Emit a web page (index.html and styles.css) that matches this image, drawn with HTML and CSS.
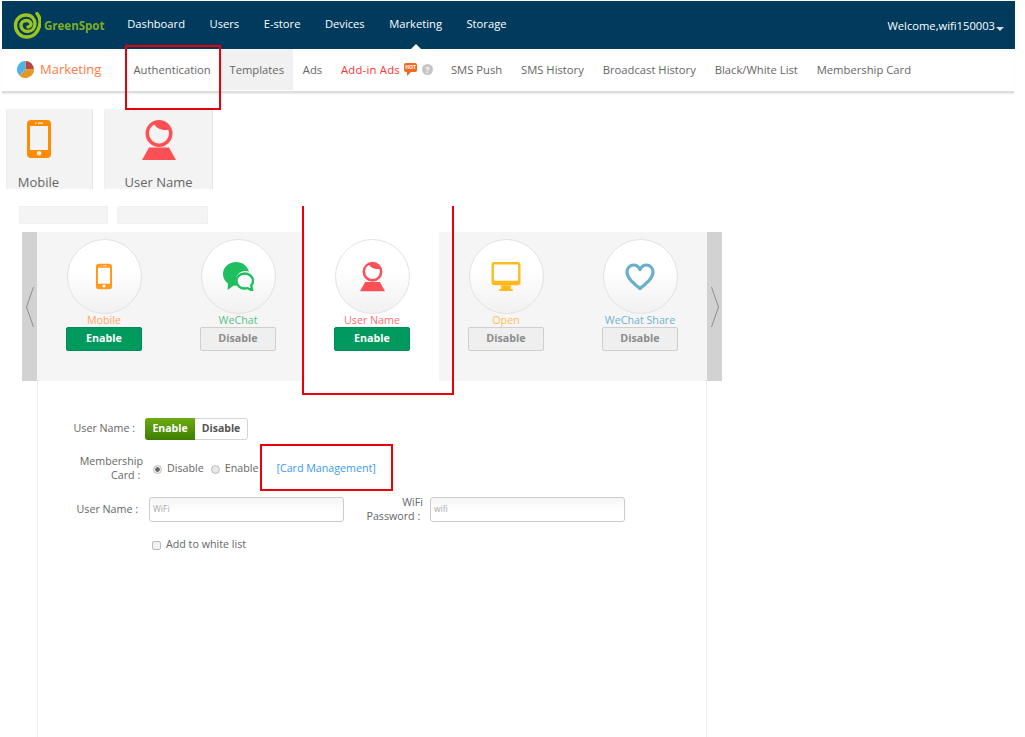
FILE: index.html
```html
<!DOCTYPE html>
<html>
<head>
<meta charset="utf-8">
<title>GreenSpot - Marketing</title>
<link rel="stylesheet" href="styles.css">
</head>
<body>
<svg width="0" height="0" class="defs">
	<symbol id="i-phone" viewBox="0 0 24 38">
		<path fill-rule="evenodd" d="M4 0h16a4 4 0 0 1 4 4v30a4 4 0 0 1-4 4H4a4 4 0 0 1-4-4V4a4 4 0 0 1 4-4zM3 6v24h18V6zM12 31a2.300 2.300 0 1 0 0 4.600 2.300 2.300 0 0 0 0-4.600zM8 2.500v1.200h1.300V2.500zM11 2.500v1.200h5V2.500z"/>
	</symbol>
	<symbol id="i-user" viewBox="0 0 34 40">
		<path fill-rule="evenodd" d="M17 0a13.500 13.500 0 1 1 0 27 13.500 13.500 0 0 1 0-27zM12.500 4.500C9 6 7 9 7 13.500a10 10 0 0 0 20 0c0-1.500-.3-2.700-.8-3.800C22 10.500 15 9.500 12.500 4.500z"/>
		<path d="M7 27.500h20L34 40H0z"/>
	</symbol>
	<symbol id="i-wechat" viewBox="0 0 31 29">
		<path d="M13 0C6 0 0 5 0 12c0 4 2 7.500 5 9.500L4.500 28l6.500-4.500c1.300.3 2.200.4 3 .3-3-5.500-.5-13 6-14.500 2-.5 4-.5 6 .5C24.500 4 19.500 0 13 0z"/>
		<path fill="none" stroke-width="2.400" d="M21.500 11.500a8 7.500 0 1 0 0 15c1 0 1.800-.1 2.700-.5l5 2.400-1-5c1.200-1.300 1.800-3 1.800-4.400 0-4.200-3.700-7.500-8.500-7.500z"/>
	</symbol>
	<symbol id="i-monitor" viewBox="0 0 30 30">
		<path fill-rule="evenodd" d="M3 0h24a3 3 0 0 1 3 3v18a3 3 0 0 1-3 3H3a3 3 0 0 1-3-3V3a3 3 0 0 1 3-3zM2.500 2.500v17h25v-17z"/>
		<path d="M10 24h10v4h-10zM8 28h14v2H8z"/>
	</symbol>
	<symbol id="i-heart" viewBox="0 0 30 28">
		<path fill="none" stroke-width="3.200" stroke-linejoin="round" d="M15 25.500C9 20.500 2 15.500 2 9c0-4 3-7 6.500-7 2.800 0 5 1.500 6.500 4.500C16.500 3.500 18.700 2 21.500 2 25 2 28 5 28 9c0 6.500-7 11.500-13 16.500z"/>
	</symbol>
</svg>

<div class="page">
	<header class="topbar">
		<a class="brand">
			<svg class="brand-mark" viewBox="0 0 28 30">
				<path fill="none" stroke="#9cc31f" stroke-width="3.400" stroke-linecap="round" d="M24 3.500C27 7 27.500 12 26.500 16c-1.500 6.500-6.500 11-12.500 11C7.500 27 2.500 22 2.500 15.500S7.500 5 13.500 5c5 0 8.500 4 8.500 8.500S19 21.500 14.500 21.500C10.500 21.500 8 18.500 8 15.500S10.500 10.500 13.500 10.500s4.500 2 4.500 3.500-1.500 3-3 3"/>
			</svg>
			<span class="brand-name">GreenSpot</span>
		</a>
		<nav class="mainnav">
			<a>Dashboard</a>
			<a>Users</a>
			<a>E-store</a>
			<a>Devices</a>
			<a class="current">Marketing</a>
			<a>Storage</a>
		</nav>
		<div class="welcome">Welcome,wifi150003<i class="caret"></i></div>
	</header>

	<div class="subnav">
		<div class="section">
			<svg class="pie" viewBox="0 0 18 18">
				<path fill="#b5493c" d="M9 9V0a9 9 0 0 1 9 9z"/>
				<path fill="#e39a24" d="M9 9h9a9 9 0 0 1-15.400 6.300z"/>
				<path fill="#4fb3e3" d="M9 9 2.600 15.300A9 9 0 0 1 9 0z"/>
			</svg>
			<span>Marketing</span>
		</div>
		<nav class="subitems">
			<a>Authentication</a>
			<a class="on">Templates</a>
			<a>Ads</a>
			<a class="addin"><span>Add-in Ads</span><b class="hot">HOT</b><i class="help">?</i></a>
			<a>SMS Push</a>
			<a>SMS History</a>
			<a>Broadcast History</a>
			<a>Black/White List</a>
			<a>Membership Card</a>
		</nav>
	</div>

	<div class="tiles">
		<div class="tile tile-mobile">
			<svg class="tile-phone"><use href="#i-phone"/></svg>
			<span>Mobile</span>
		</div>
		<div class="tile tile-user">
			<svg class="tile-person"><use href="#i-user"/></svg>
			<span>User Name</span>
		</div>
	</div>

	<div class="blanks">
		<div class="blank blank-a"></div>
		<div class="blank blank-b"></div>
	</div>

	<div class="carousel">
		<div class="arrow">
			<svg width="8" height="40" viewBox="0 0 8 40"><path d="M7.500 0 .5 20l7 20"/></svg>
		</div>
		<div class="cards">
			<div class="card mobile">
				<div class="circle"><svg class="ic-phone"><use href="#i-phone"/></svg></div>
				<div class="name">Mobile</div>
				<button class="btn go">Enable</button>
			</div>
			<div class="card wechat">
				<div class="circle"><svg class="ic-wechat"><use href="#i-wechat"/></svg></div>
				<div class="name">WeChat</div>
				<button class="btn off">Disable</button>
			</div>
			<div class="card username selected">
				<div class="circle"><svg class="ic-user"><use href="#i-user"/></svg></div>
				<div class="name">User Name</div>
				<button class="btn go">Enable</button>
			</div>
			<div class="card open">
				<div class="circle"><svg class="ic-monitor"><use href="#i-monitor"/></svg></div>
				<div class="name">Open</div>
				<button class="btn off">Disable</button>
			</div>
			<div class="card share">
				<div class="circle"><svg class="ic-heart"><use href="#i-heart"/></svg></div>
				<div class="name">WeChat Share</div>
				<button class="btn off">Disable</button>
			</div>
		</div>
		<div class="arrow">
			<svg width="8" height="40" viewBox="0 0 8 40"><path d="M.5 0l7 20-7 20"/></svg>
		</div>
	</div>

	<div class="panel">
		<div class="row row-toggle">
			<label class="lbl lbl-a">User Name :</label>
			<div class="toggle">
				<span class="yes">Enable</span>
				<span class="no">Disable</span>
			</div>
		</div>
		<div class="row row-card">
			<label class="lbl lbl-b">Membership Card :&nbsp;</label>
			<label class="opt"><input type="radio" name="card" checked>Disable</label>
			<label class="opt"><input type="radio" name="card">Enable</label>
			<a class="cardlink">[Card Management]</a>
		</div>
		<div class="row row-login">
			<label class="lbl lbl-c">User Name :</label>
			<input class="field" type="text" value="WiFi">
			<label class="lbl lbl-d">WiFi Password :&nbsp;</label>
			<input class="field" type="text" value="wifi">
		</div>
		<div class="row row-white">
			<label class="opt"><input type="checkbox">Add to white list</label>
		</div>
	</div>
</div>

<div class="mark mark-auth"></div>
<div class="mark mark-card"></div>
<div class="mark mark-manage"></div>
</body>
</html>
```

FILE: styles.css
```css
* {
	box-sizing: border-box;
}

html, body {
	margin: 0;
	height: 737px;
	overflow: hidden;
	background-color: #FFF;
}

body {
	position: relative;
	font-family: "Open Sans", "Liberation Sans", sans-serif;
	font-size: 10.700px;
	color: #666;
}

a {
	text-decoration: none;
}

.defs {
	position: absolute;
}

.page {
	display: flex;
	flex-direction: column;
	height: 737px;
	padding-top: 1px;
}

/* top bar */
.topbar {
	display: flex;
	align-items: center;
	height: 48px;
	margin-left: 2px;
	width: 1013px;
	background-color: #003A5D;
	color: #FFF;
}

.brand {
	display: flex;
	align-items: center;
	width: 113px;
	padding-left: 11px;
}

.brand-mark {
	width: 28px;
	height: 30px;
}

.brand-name {
	margin-left: 3px;
	font-size: 11.500px;
	font-weight: 700;
	color: #7FAE22;
}

.mainnav {
	display: flex;
	height: 100%;
}

.mainnav a {
	position: relative;
	display: flex;
	align-items: center;
	padding: 0 12.250px 4px;
	font-size: 11.200px;
	color: #FFF;
}

.mainnav a.current::after {
	content: "";
	position: absolute;
	left: 50%;
	bottom: 0;
	margin-left: -5px;
	border: 5px solid transparent;
	border-top: 0;
	border-bottom-color: #FFF;
}

.welcome {
	margin-left: auto;
	margin-right: 11px;
	font-size: 11.200px;
	color: #FFF;
}

.caret {
	display: inline-block;
	margin-left: 1px;
	vertical-align: -1px;
	border: 4px solid transparent;
	border-bottom: 0;
	border-top-color: #D5DDE3;
}

/* second bar */
.subnav {
	display: flex;
	height: 44px;
	width: 1012px;
	margin-left: 2px;
	border-bottom: 2px solid #DDD;
	box-shadow: 0 1px 1px #EEE;
}

.section {
	display: flex;
	align-items: center;
	width: 123px;
	padding-left: 15px;
	padding-bottom: 2px;
	font-size: 13px;
	color: #FF7A45;
}

.pie {
	width: 17px;
	height: 17px;
	margin-right: 6px;
}

.subitems {
	display: flex;
	margin-left: -.900px;
}

.subitems a {
	display: flex;
	align-items: center;
	padding: 0 9.400px 1px;
	height: 41px;
	color: #666;
	font-size: 11.250px;
}

.subitems a.on {
	background-color: #F1F1F1;
}

.subitems a.addin {
	padding-right: 8.500px;
	color: #F33;
}

.addin span {
	letter-spacing: .25px;
}

.hot {
	position: relative;
	width: 13px;
	height: 9px;
	margin: -4px 0 0 4px;
	border-radius: 2px;
	background-color: #F26A21;
	color: #FFF;
	font-size: 5px;
	line-height: 9px;
	text-align: center;
}

.hot::after {
	content: "";
	position: absolute;
	left: 3px;
	top: 9px;
	border: 2px solid transparent;
	border-top-color: #F26A21;
	border-left-color: #F26A21;
}

.help {
	width: 11px;
	height: 11px;
	margin-left: 5px;
	border-radius: 50%;
	background-color: #C4C4C4;
	color: #FFF;
	font-size: 8px;
	font-style: normal;
	font-weight: 700;
	line-height: 11px;
	text-align: center;
}

/* method tiles */
.tiles {
	display: flex;
	margin: 16px 0 0 6px;
	gap: 11px;
}

.tile {
	display: flex;
	flex-direction: column;
	align-items: center;
	height: 80px;
	background-color: #F3F3F3;
	border-right: 1px solid #E6E6E6;
	border-left: 1px solid #EEE;
	font-size: 13px;
	line-height: 14px;
	color: #666;
}

.tile > * {
	flex: none;
}

.tile-mobile {
	width: 87px;
	padding-right: 22px;
	fill: #FF8C00;
}

.tile-user {
	width: 109px;
	fill: #FD5055;
}

.tile-phone {
	width: 24px;
	height: 38px;
	margin-top: 11px;
	margin-bottom: 17px;
}

.tile-person {
	width: 34px;
	height: 40px;
	margin-top: 11px;
	margin-bottom: 15px;
}

.blanks {
	display: flex;
	gap: 9px;
	margin: 17px 0 0 19px;
}

.blank {
	height: 18px;
	background-color: #F4F4F4;
	border: 1px solid #F0F0F0;
}

.blank-a {
	width: 89px;
}

.blank-b {
	width: 91px;
}

/* carousel */
.carousel {
	display: flex;
	margin: 8px 0 0 22px;
	width: 700px;
	height: 149px;
}

.arrow {
	display: flex;
	align-items: center;
	justify-content: center;
	width: 15px;
	background-color: #D2D2D2;
}

.arrow path {
	fill: none;
	stroke: #8E8E8E;
}

.cards {
	display: flex;
	flex: 1;
	background-color: #F5F5F5;
}

.card {
	display: flex;
	flex-direction: column;
	align-items: center;
	width: 134px;
	padding-top: 7px;
}

.card.selected {
	background-color: #FFF;
}

.circle {
	display: flex;
	align-items: center;
	justify-content: center;
	width: 75px;
	height: 75px;
	border: 1px solid #E2E2E2;
	border-radius: 50%;
	background: linear-gradient(#FFF 40%, #F1F1F1);
}

.name {
	height: 13px;
	font-size: 10.700px;
	line-height: 12.500px;
}

.btn {
	width: 76px;
	height: 24px;
	padding: 0 0 3px;
	border-radius: 2px;
	font-family: inherit;
	font-size: 10.700px;
	font-weight: 700;
}

.btn.go {
	background-color: #009A5E;
	border: 1px solid #008D56;
	color: #FFF;
}

.btn.off {
	background-color: #EFEFEF;
	border: 1px solid #CFCFCF;
	color: #8C8C8C;
}

.mobile svg {
	fill: #FF9A1F;
}

.mobile .name {
	color: #FFA566;
}

.wechat svg {
	fill: #1FBF5F;
	stroke: #1FBF5F;
	stroke-width: 0;
}

.wechat .name {
	color: #5CC08A;
}

.username svg {
	fill: #FD4F55;
}

.username .name {
	color: #FF6C73;
}

.open svg {
	fill: #FFBA1E;
}

.open .name {
	color: #FFBC5C;
}

.share svg {
	stroke: #6BB0C6;
}

.share .name {
	color: #6DB4CB;
}

.ic-phone {
	width: 16px;
	height: 31px;
}

.ic-wechat {
	width: 31px;
	height: 29px;
}

.ic-user {
	width: 25px;
	height: 31px;
}

.ic-monitor {
	width: 30px;
	height: 29px;
}

.ic-heart {
	width: 30px;
	height: 28px;
}

/* form under the carousel */
.panel {
	flex: 1;
	margin-left: 37px;
	width: 670px;
	padding-top: 37px;
	border-left: 1px solid #EEE;
	border-right: 1px solid #EEE;
}

.row {
	display: flex;
	align-items: center;
}

.lbl {
	flex: none;
	text-align: right;
	padding-bottom: 3px;
}

.lbl-a {
	width: 97px;
	margin-right: 10px;
}

.lbl-b {
	width: 105px;
	margin-right: 10px;
	line-height: 14px;
	padding-left: 38px;
}

.lbl-c {
	width: 100px;
	margin-right: 11px;
	padding-bottom: 1px;
}

.lbl-d {
	width: 60px;
	margin: 0 7px 0 19px;
	padding-bottom: 1px;
	line-height: 14px;
}

.row-toggle {
	height: 22px;
}

.row-card {
	height: 28px;
	margin-top: 15px;
}

.row-login {
	height: 25px;
	margin-top: 14px;
}

.row-white {
	margin-top: 15px;
	padding-left: 114px;
}

.toggle {
	display: flex;
	height: 22px;
	width: 103px;
	border: 1px solid #D5D5D5;
	border-radius: 3px;
	font-size: 10.500px;
	font-weight: 700;
	line-height: 18px;
	text-align: center;
}

.toggle .yes {
	width: 50px;
	margin: -1px 0 -1px -1px;
	line-height: 20px;
	border-radius: 3px 0 0 3px;
	background: linear-gradient(#6DAB12, #3D7D02);
	color: #FFF;
}

.toggle .no {
	flex: 1;
	color: #555;
}

.opt {
	display: flex;
	align-items: center;
	margin-right: 7px;
	padding-bottom: 3px;
}

.opt input {
	appearance: none;
	width: 9px;
	height: 9px;
	margin: 3px 5px 0 0;
	background-color: #E8E8E8;
	border: 1px solid #BBB;
}

.opt input[type="radio"] {
	border-radius: 50%;
}

.opt input[type="radio"]:checked {
	background: radial-gradient(circle, #666 2px, #F2F2F2 2.500px);
}

.opt input[type="checkbox"] {
	border-radius: 2px;
	background-color: #F2F2F2;
}

.cardlink {
	margin-left: 11px;
	padding-bottom: 3px;
	color: #3A9BF0;
}

.field {
	width: 195px;
	height: 25px;
	padding: 0 3px 2px;
	border: 1px solid #CCC;
	border-radius: 3px;
	background: linear-gradient(#F6F6F6, #FFF 60%);
	font-family: inherit;
	font-size: 8.500px;
	color: #AAA;
}

/* red notes drawn over the shot */
.mark {
	position: absolute;
	border: 2px solid #E8000B;
}

.mark-auth {
	left: 125px;
	top: 45px;
	width: 96px;
	height: 65px;
}

.mark-card {
	left: 302px;
	top: 206px;
	width: 152px;
	height: 189px;
	border-top: 0;
}

.mark-manage {
	left: 260px;
	top: 444px;
	width: 133px;
	height: 47px;
}
```
